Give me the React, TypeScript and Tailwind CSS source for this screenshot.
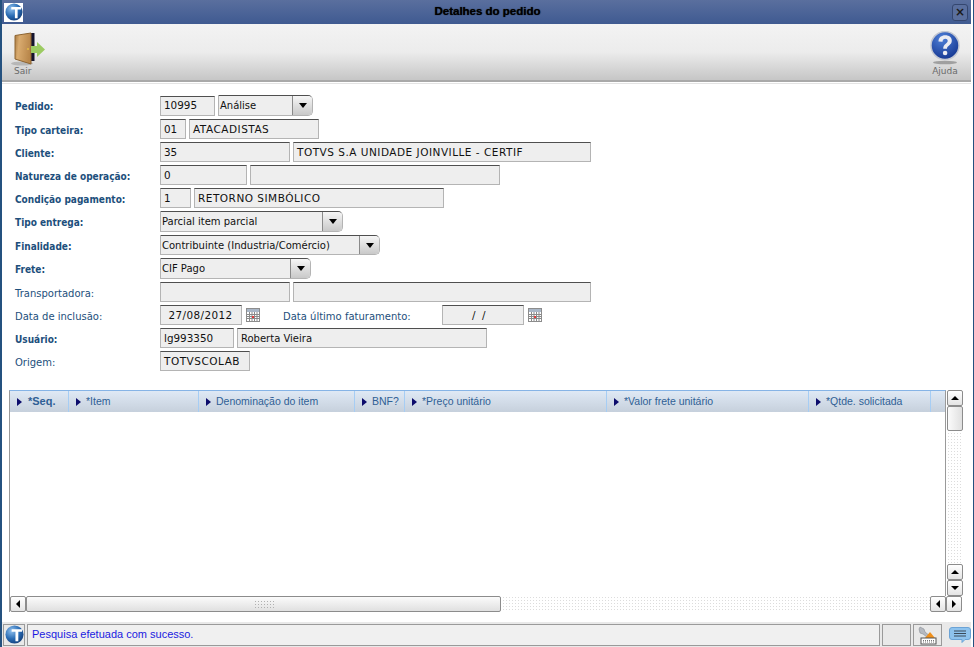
import type { ReactNode } from "react";

const verdana = "font-['DejaVu_Sans',sans-serif]";

function Field({ w, caps, children, className = "" }: { w: string; caps?: boolean; children?: ReactNode; className?: string }) {
  return (
    <div
      className={`flex h-5 shrink-0 items-center truncate border border-[#b4b4b4] border-t-[#4f4f4f] bg-[#eeeeee] pt-px text-[#111] ${caps ? "pl-[3px] text-[10.5px] tracking-[0.5px]" : "pl-[3px] text-[10.4px]"} ${w} ${className}`}
    >
      {children}
    </div>
  );
}

function Select({ w, h = "h-[21px]", value }: { w: string; h?: string; value: string }) {
  return (
    <div className={`flex shrink-0 rounded-r-[5px] border border-[#b4b4b4] border-t-[#4f4f4f] bg-[#eeeeee] text-[10px] text-[#111] ${h} ${w}`}>
      <div className="flex min-w-0 flex-1 items-center pl-px">{value}</div>
      <div className="flex w-5 shrink-0 items-center justify-center rounded-r-[4px] border-l border-[#8a8a8a] bg-gradient-to-b from-[#f6f6f6] to-[#c9c9c9]">
        <div className="h-0 w-0 border-x-[4px] border-t-[5px] border-x-transparent border-t-black" />
      </div>
    </div>
  );
}

function Row({ label, bold = true, children }: { label: string; bold?: boolean; children: ReactNode }) {
  return (
    <div className="flex items-center">
      <div
        className={`w-[145px] shrink-0 pt-0.5 text-[#1d4f7c] ${
          bold ? "font-['DejaVu_Sans_Condensed','DejaVu_Sans',sans-serif] text-[10px] font-bold" : "text-[10px]"
        }`}
      >
        {label}
      </div>
      <div className="flex items-center gap-[3px]">{children}</div>
    </div>
  );
}

function CalendarIcon() {
  return (
    <svg width="14" height="14" viewBox="0 0 14 14" className="shrink-0">
      <rect x="0.5" y="0.5" width="13" height="13" fill="#fff" stroke="#8c8c8c" />
      <rect x="1" y="1" width="12" height="3" fill="#a9b6c6" />
      <path d="M1 6.5h12M1 8.5h12M1 10.5h12M3.5 4v9M6 4v9M8.5 4v9M11 4v9" stroke="#8a8a8a" strokeWidth="1" />
      <rect x="6" y="8" width="2" height="2" fill="#e23a3a" />
    </svg>
  );
}

function LogoIcon({ size, id }: { size: number; id: string }) {
  return (
    <svg width={size} height={size} viewBox="0 0 20 20" className="shrink-0">
      <defs>
        <radialGradient id={id} cx="0.35" cy="0.3" r="0.8">
          <stop offset="0" stopColor="#8fc0ee" />
          <stop offset="0.55" stopColor="#2a6cb4" />
          <stop offset="1" stopColor="#123a74" />
        </radialGradient>
      </defs>
      <circle cx="10" cy="10" r="9.5" fill={`url(#${id})`} />
      <path d="M7 4.500h11v2.600h-4V17h-3V7.100H7z" fill="#fff" />
    </svg>
  );
}

function DoorIcon() {
  return (
    <svg width="36" height="36" viewBox="0 0 36 36" className="shrink-0">
      <defs>
        <linearGradient id="door" x1="0" y1="0" x2="1" y2="0.2">
          <stop offset="0" stopColor="#a87a42" />
          <stop offset="0.3" stopColor="#d9ab6f" />
          <stop offset="1" stopColor="#b9874b" />
        </linearGradient>
      </defs>
      <ellipse cx="12" cy="32.500" rx="11" ry="2" fill="#8a8a8a" opacity="0.45" />
      <rect x="20" y="2" width="4.500" height="28" fill="#14142e" />
      <path d="M5 4.500 L21 2 V33 L5 28 Z" fill="url(#door)" stroke="#8d6431" strokeWidth="1" />
      <circle cx="18" cy="18" r="0.900" fill="#e8c040" />
      <path d="M21 15h6v-4l8 7.500-8 7.500v-4h-6z" fill="#9ccb62" />
    </svg>
  );
}

function HelpIcon() {
  return (
    <svg width="34" height="36" viewBox="0 0 34 36" className="shrink-0">
      <defs>
        <radialGradient id="help" cx="0.4" cy="0.25" r="0.85">
          <stop offset="0" stopColor="#4f80d8" />
          <stop offset="1" stopColor="#0f2f8a" />
        </radialGradient>
      </defs>
      <ellipse cx="17" cy="31.500" rx="12" ry="1.800" fill="#777" opacity="0.6" />
      <circle cx="17" cy="14.500" r="14" fill="url(#help)" stroke="#c4c8d2" strokeWidth="1.500" />
      <path d="M10.500 10.500c0-4 3-6.200 6.700-6.200 4 0 6.600 2.200 6.600 5.500 0 4.500-4.800 4.600-4.800 8h-3.800c0-5 4.500-5.200 4.500-8 0-1.200-1-2-2.400-2-1.600 0-2.700 1.100-2.800 2.900z" fill="#ececf2" />
      <circle cx="17.100" cy="22" r="2.300" fill="#ececf2" />
    </svg>
  );
}

function ScrollButton({ dir, className = "" }: { dir: "up" | "down" | "left" | "right"; className?: string }) {
  const arrows = {
    up: "border-x-[4px] border-b-[4px] border-x-transparent border-b-black",
    down: "border-x-[4px] border-t-[4px] border-x-transparent border-t-black",
    left: "border-y-[4px] border-r-[4px] border-y-transparent border-r-black",
    right: "border-y-[4px] border-l-[4px] border-y-transparent border-l-black",
  };
  return (
    <div className={`flex h-4 w-4 shrink-0 items-center justify-center rounded-[2px] border border-[#8c8c8c] bg-gradient-to-b from-[#ffffff] to-[#e4e4e4] ${className}`}>
      <div className={`h-0 w-0 ${arrows[dir]}`} />
    </div>
  );
}

const columns = [
  { w: "w-[59px]", label: "*Seq.", bold: true },
  { w: "w-[130px]", label: "*Item" },
  { w: "w-[156px]", label: "Denominação do item" },
  { w: "w-[50px]", label: "BNF?" },
  { w: "w-[202px]", label: "*Preço unitário" },
  { w: "w-[202px]", label: "*Valor frete unitário" },
  { w: "w-[122px]", label: "*Qtde. solicitada" },
];

export default function App() {
  return (
    <div className={`flex h-[647px] w-[974px] flex-col overflow-hidden border-r border-l-2 border-[#24517f] bg-white pr-0.5 ${verdana}`}>
      <header className="flex h-6 shrink-0 items-center justify-between bg-gradient-to-b from-[#5a6f9e] to-[#3f5a91] pr-[3px]">
        <div className="ml-0.5 flex h-[19px] w-[19px] items-center justify-center bg-white">
          <LogoIcon size={18} id="globe-top" />
        </div>
        <div className="flex-1 text-center font-['Liberation_Sans',sans-serif] text-[11.5px] font-bold text-black [text-shadow:0_0_1px_#111]">
          Detalhes do pedido
        </div>
        <div className="flex h-[17px] w-[16px] items-center justify-center rounded-[3px] border border-[#34466f] bg-[#5a6f9e] text-[12px] leading-none font-bold text-[#1a1a1a]">
          ×
        </div>
      </header>

      <div className="flex h-[58px] shrink-0 items-start justify-between border-b-2 border-[#a9a9a9] bg-gradient-to-b from-[#f3f3f3] via-[#ececec] to-[#c6c6c6] pt-[7px] pr-[9px] pl-2">
        <div className="flex flex-col items-start text-[9px] text-[#6a6a6a]">
          <DoorIcon />
          <span className="-mt-0.5 ml-1">Sair</span>
        </div>
        <div className="flex flex-col items-center text-[9px] text-[#6a6a6a]">
          <HelpIcon />
          <span className="-mt-0.5">Ajuda</span>
        </div>
      </div>

      <div className="mt-px flex flex-1 flex-col border-t border-[#e4e4e4] pt-[11px] pl-[13px]">
        <div className="flex flex-col gap-[3px]">
          <Row label="Pedido:">
            <Field w="w-[55px]" className="pl-1">10995</Field>
            <Select w="w-[95px]" value="Análise" />
          </Row>
          <Row label="Tipo carteira:">
            <Field w="w-[26px]" className="pl-1">01</Field>
            <Field w="w-[130px]" caps>ATACADISTAS</Field>
          </Row>
          <Row label="Cliente:">
            <Field w="w-[130px]">35</Field>
            <Field w="w-[298px]" caps>TOTVS S.A UNIDADE JOINVILLE - CERTIF</Field>
          </Row>
          <Row label="Natureza de operação:">
            <Field w="w-[87px]">0</Field>
            <Field w="w-[250px]" />
          </Row>
          <Row label="Condição pagamento:">
            <Field w="w-[31px]">1</Field>
            <Field w="w-[250px]" caps>RETORNO SIMBÓLICO</Field>
          </Row>
          <Row label="Tipo entrega:">
            <Select w="w-[183px]" value="Parcial item parcial" />
          </Row>
          <Row label="Finalidade:">
            <Select w="w-[220px]" h="h-5" value="Contribuinte (Industria/Comércio)" />
          </Row>
          <Row label="Frete:">
            <Select w="w-[151px]" value="CIF Pago" />
          </Row>
          <Row label="Transportadora:" bold={false}>
            <Field w="w-[130px]" />
            <Field w="w-[298px]" />
          </Row>
          <Row label="Data de inclusão:" bold={false}>
            <Field w="w-[82px]" className="justify-center pr-1 pl-0 tracking-[0.4px]">27/08/2012</Field>
            <div className="ml-px"><CalendarIcon /></div>
            <div className="ml-5 w-[156px] pt-0.5 text-[10px] text-[#1d4f7c]">Data último faturamento:</div>
            <Field w="w-[82px]" className="pl-[29px] whitespace-pre">{"/  /"}</Field>
            <div className="ml-px"><CalendarIcon /></div>
          </Row>
          <Row label="Usuário:">
            <Field w="w-[74px]">lg993350</Field>
            <Field w="w-[250px]" className="text-[10px]">Roberta Vieira</Field>
          </Row>
          <Row label="Origem:" bold={false}>
            <Field w="w-[90px]" caps>TOTVSCOLAB</Field>
          </Row>
        </div>

        <div className="mt-[19px] -ml-[6px] flex h-[222px] w-[953px] flex-col font-['Liberation_Sans',sans-serif]">
          <div className="flex min-h-0 flex-1">
            <div className="flex w-[937px] flex-col border-x border-t border-[#9a9a9a] border-t-[#86b4e6]">
              <div className="flex h-[21px] shrink-0 bg-gradient-to-b from-[#dfe9f5] to-[#c6d0dc]">
                {columns.map((c) => (
                  <div
                    key={c.label}
                    className={`flex shrink-0 items-center border-r border-[#a6cdf4] pl-[7px] text-[#2f5f95] ${c.w} ${c.bold ? "gap-[6px] text-[11px] font-bold" : "gap-[5px] text-[10.5px]"}`}
                  >
                    <div className="h-0 w-0 border-y-[4px] border-l-[5px] border-y-transparent border-l-[#0c0c6c]" />
                    {c.label}
                  </div>
                ))}
              </div>
            </div>
            <div className="ml-px flex w-[15px] flex-col justify-between bg-[radial-gradient(#dcdcdc_1px,transparent_1px)] bg-[length:3px_3px]">
              <div className="flex flex-col">
                <ScrollButton dir="up" />
                <div className="h-[25px] w-4 rounded-[2px] border border-[#8c8c8c] bg-gradient-to-r from-[#fbfbfb] to-[#e0e0e0]" />
              </div>
              <div className="flex flex-col">
                <ScrollButton dir="up" />
                <ScrollButton dir="down" />
              </div>
            </div>
          </div>
          <div className="flex h-4 shrink-0 border-l border-[#9a9a9a] bg-[radial-gradient(#dcdcdc_1px,transparent_1px)] bg-[length:3px_3px]">
            <ScrollButton dir="left" />
            <div className="flex w-[475px] items-center justify-center rounded-[2px] border border-[#8c8c8c] bg-gradient-to-b from-[#fbfbfb] to-[#e0e0e0]">
              <div className="h-2 w-5 bg-[radial-gradient(#b0b0b0_1px,transparent_1px)] bg-[length:3px_3px]" />
            </div>
            <div className="flex-1" />
            <ScrollButton dir="left" />
            <ScrollButton dir="right" />
          </div>
        </div>

        <div className="mt-[10px] -ml-[13px] flex h-[25px] items-center gap-[2px] bg-[#e9e9e9] pl-px">
          <div className="flex h-[22px] w-[22px] items-center justify-center border border-[#9a9a9a]">
            <LogoIcon size={19} id="globe-status" />
          </div>
          <div className="flex h-[22px] w-[853px] items-center border border-[#9a9a9a] bg-[#f0f0f0] pl-1 font-['Liberation_Sans',sans-serif] text-[11px] text-[#1a1ae0]">
            Pesquisa efetuada com sucesso.
          </div>
          <div className="h-[22px] w-[29px] border border-[#9a9a9a]" />
          <div className="flex h-[22px] w-[29px] items-center justify-center border border-[#9a9a9a]">
            <svg width="20" height="20" viewBox="0 0 20 20">
              <path d="M2 2l4 2 1 3 5 4-2 2-5-4-3-1-1-4z" fill="#b5b9c0" stroke="#7c8088" strokeWidth="0.500" />
              <path d="M12 7l5 6H7z" fill="#ef8f1a" />
              <rect x="3" y="13" width="15" height="6" fill="#fff" stroke="#555" />
              <path d="M5 15.500h11M5 17h11" stroke="#777" strokeDasharray="1 1" />
            </svg>
          </div>
          <div className="ml-[5px] flex w-[22px] items-center justify-center">
            <svg width="22" height="16" viewBox="0 0 22 16">
              <path d="M3 0.500h16a2.500 2.500 0 0 1 2.500 2.500v7a2.500 2.500 0 0 1-2.500 2.500h-3l-3 3v-3H3a2.500 2.500 0 0 1-2.500-2.500V3A2.500 2.500 0 0 1 3 0.500z" fill="#8ec3ee" stroke="#6ba3d6" />
              <path d="M5 4h12M5 6.500h12M5 9h12" stroke="#3a4a5a" strokeWidth="1" />
            </svg>
          </div>
        </div>
      </div>
    </div>
  );
}
